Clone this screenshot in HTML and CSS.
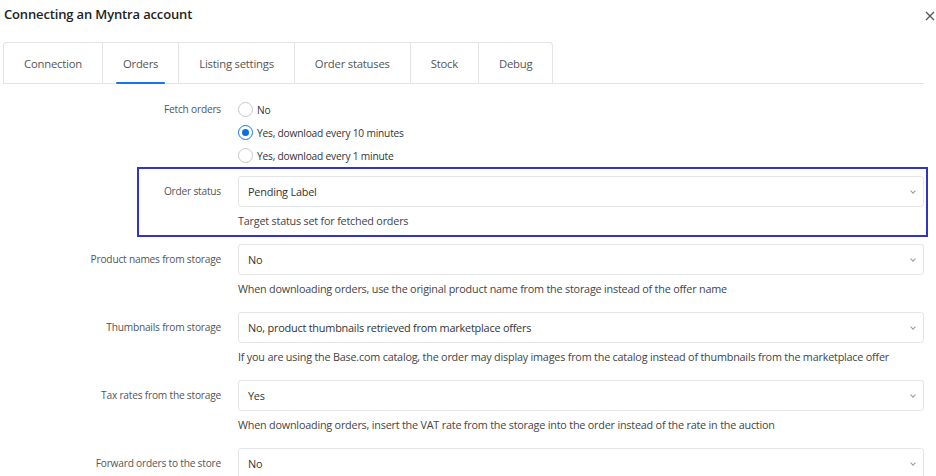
FILE: index.html
```html
<!DOCTYPE html>
<html>
<head>
<meta charset="utf-8">
<link rel="stylesheet" href="styles.css">
</head>
<body>
<div class="modal">
  <div class="header">
    <h1 class="title">Connecting an Myntra account</h1>
    <button class="close" aria-label="Close">
      <svg width="10" height="10" viewBox="0 0 10 10"><path d="M1 1L9 9M9 1L1 9" stroke="#555" stroke-width="1.3" fill="none"/></svg>
    </button>
  </div>
  <ul class="tabs">
    <li class="tab first">Connection</li>
    <li class="tab active">Orders</li>
    <li class="tab">Listing settings</li>
    <li class="tab">Order statuses</li>
    <li class="tab">Stock</li>
    <li class="tab last">Debug</li>
  </ul>
  <div class="form">
    <div class="row radios-row">
      <div class="label radio-label">Fetch orders</div>
      <div class="control">
        <label class="radio"><span class="circle"></span>No</label>
        <label class="radio"><span class="circle checked"></span>Yes, download every 10 minutes</label>
        <label class="radio"><span class="circle"></span>Yes, download every 1 minute</label>
      </div>
    </div>
    <div class="row hl">
      <div class="label">Order status</div>
      <div class="control">
        <div class="select">Pending Label<span class="chev"></span></div>
        <div class="help">Target status set for fetched orders</div>
      </div>
    </div>
    <div class="row">
      <div class="label">Product names from storage</div>
      <div class="control">
        <div class="select">No<span class="chev"></span></div>
        <div class="help">When downloading orders, use the original product name from the storage instead of the offer name</div>
      </div>
    </div>
    <div class="row">
      <div class="label">Thumbnails from storage</div>
      <div class="control">
        <div class="select">No, product thumbnails retrieved from marketplace offers<span class="chev"></span></div>
        <div class="help">If you are using the Base.com catalog, the order may display images from the catalog instead of thumbnails from the marketplace offer</div>
      </div>
    </div>
    <div class="row">
      <div class="label">Tax rates from the storage</div>
      <div class="control">
        <div class="select">Yes<span class="chev"></span></div>
        <div class="help">When downloading orders, insert the VAT rate from the storage into the order instead of the rate in the auction</div>
      </div>
    </div>
    <div class="row">
      <div class="label">Forward orders to the store</div>
      <div class="control">
        <div class="select">No<span class="chev"></span></div>
      </div>
    </div>
  </div>
</div>
</body>
</html>
```
FILE: styles.css
```css
* { box-sizing: border-box; }
html, body { margin: 0; padding: 0; background: #fff; }
body {
  font-family: "Open Sans", "Noto Sans", sans-serif;
  color: #333;
  width: 936px;
  height: 476px;
  overflow: hidden;
}
.modal { width: 936px; }
.header {
  display: flex;
  justify-content: space-between;
  align-items: flex-start;
  height: 42px;
  padding: 5px 0 0 4px;
}
.title {
  margin: 0;
  font-size: 13px;
  letter-spacing: -0.15px;
  font-weight: 600;
  line-height: 18px;
  color: #222;
}
.close {
  border: 0;
  background: none;
  padding: 0;
  margin: 6px 0 0 0;
  width: 10px;
  height: 10px;
  display: block;
  position: relative;
  left: -1px;
}
.close svg { display: block; }
.tabs {
  list-style: none;
  margin: 0 0 0 3px;
  padding: 0;
  width: 921px;
  display: flex;
  border-bottom: 1px solid #e4e4e6;
}
.tab {
  position: relative;
  height: 41px;
  padding: 0 20px;
  display: flex;
  align-items: center;
  font-size: 11.3px;
  letter-spacing: -0.22px;
  color: #555;
  border: 1px solid #e4e4e6;
  border-bottom: 0;
  margin-right: -1px;
}
.tab.first { border-top-left-radius: 4px; }
.tab.last { border-top-right-radius: 4px; }
.tab.active::after {
  content: "";
  position: absolute;
  left: 13px;
  right: 13px;
  bottom: -1px;
  height: 2px;
  border-radius: 2px;
  background: #1a73e8;
}
.form { padding-top: 14px; }
.row {
  display: grid;
  grid-template-columns: 221px 1fr;
  column-gap: 17px;
  width: 924px;
  margin-bottom: 15px;
}
.label {
  text-align: right;
  font-size: 10.2px;
  letter-spacing: -0.22px;
  color: #555;
  height: 31px;
  line-height: 31px;
  white-space: nowrap;
}
.radio-label { height: 23px; line-height: 23px; }
.radios-row { margin-bottom: 0; }
.radio {
  display: flex;
  align-items: center;
  height: 23px;
  font-size: 10.2px;
  letter-spacing: -0.2px;
  color: #333;
  gap: 4px;
}
.circle {
  width: 15px;
  height: 15px;
  border-radius: 50%;
  border: 1px solid #c9c9cc;
  background: #fff;
  flex: none;
  position: relative;
}
.circle.checked { border-color: #1a73e8; }
.circle.checked::after {
  content: "";
  position: absolute;
  left: 3px; top: 3px;
  width: 7px; height: 7px;
  border-radius: 50%;
  background: #0b6ee0;
}
.select {
  position: relative;
  height: 31px;
  border: 1px solid #e4e5e8;
  border-radius: 3px;
  padding: 0 9px;
  line-height: 29px;
  font-size: 10.9px;
  letter-spacing: -0.22px;
  color: #333;
}
.chev {
  position: absolute;
  right: 8px;
  top: 12px;
  width: 4px;
  height: 4px;
  border-right: 1.2px solid #999;
  border-bottom: 1.2px solid #999;
  transform: rotate(45deg);
}
.help {
  margin-top: 6px;
  font-size: 10.8px;
  letter-spacing: -0.2px;
  line-height: 16px;
  color: #444;
  white-space: nowrap;
}
.row.hl {
  margin-left: 137px;
  width: 791px;
  border: 2px solid #3333c6;
  grid-template-columns: 82px 1fr;
  padding: 7px 2px 6px 0;
  margin-bottom: 7px;
}
```
